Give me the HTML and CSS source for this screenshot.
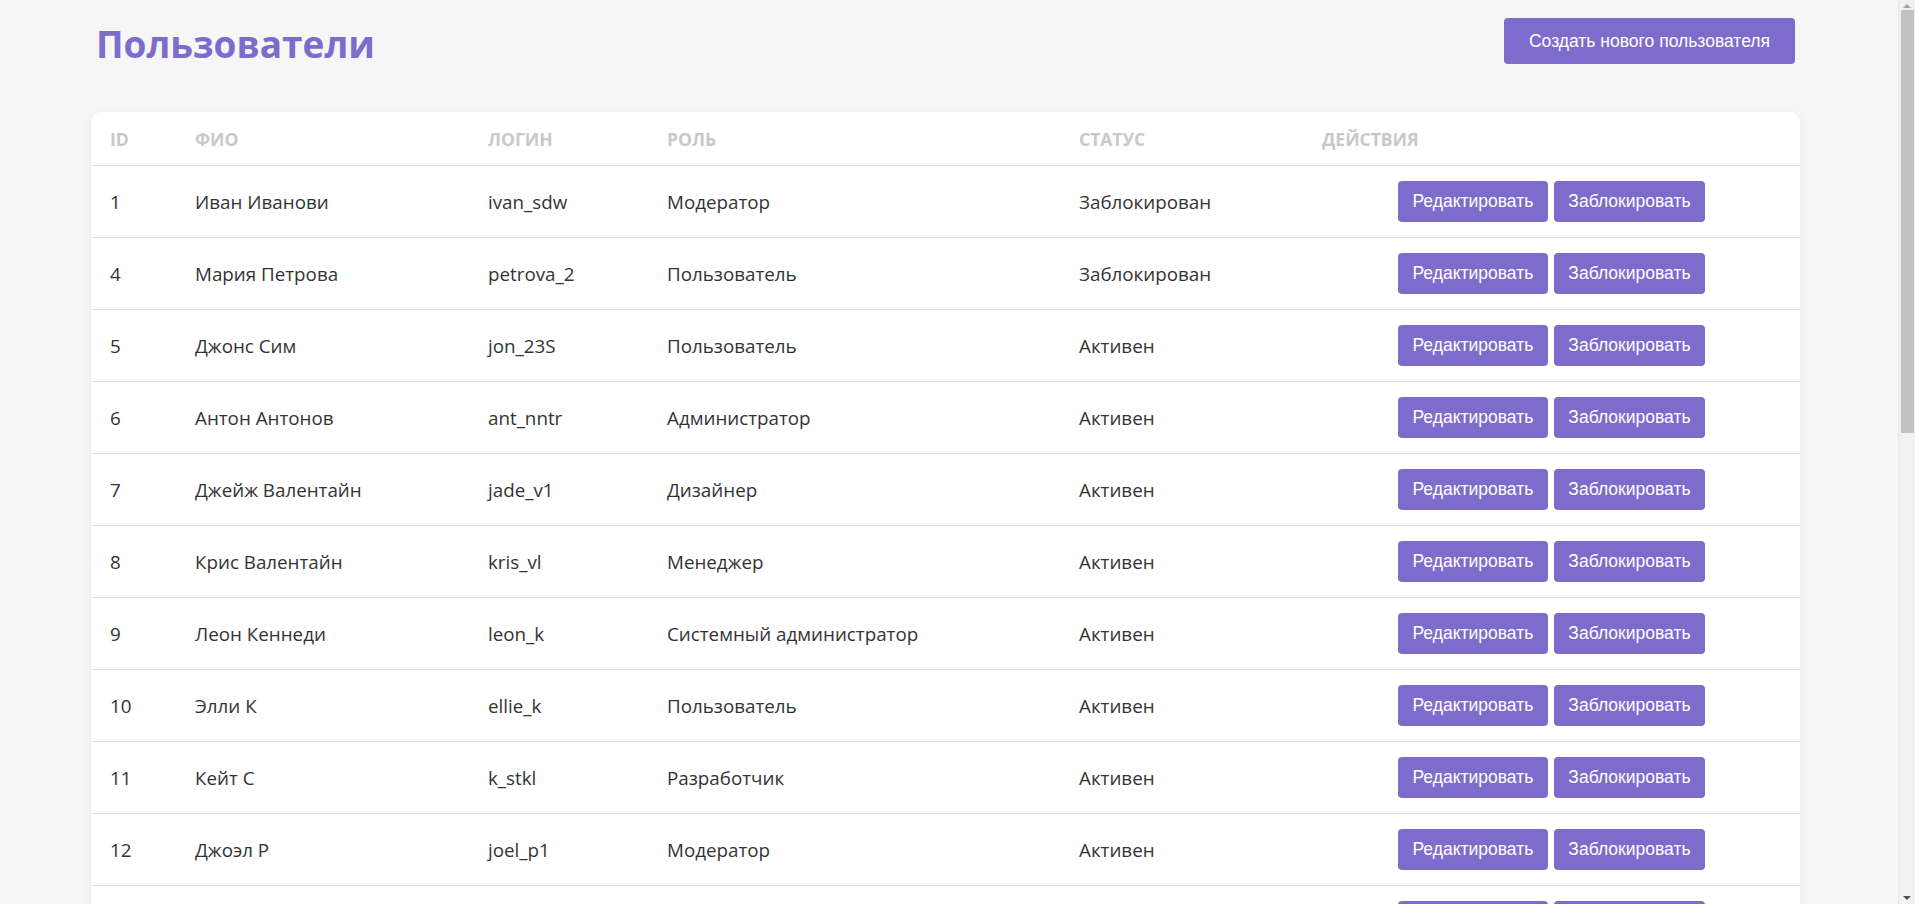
FILE: index.html
```html
<!DOCTYPE html>
<html lang="ru">
<head>
<meta charset="utf-8">
<title>Пользователи</title>
<link rel="stylesheet" href="styles.css">
</head>
<body>
<div class="page">
  <header class="page-header">
    <h1 class="page-title">Пользователи</h1>
    <button class="btn btn-create">Создать нового пользователя</button>
  </header>
  <div class="card">
    <table class="users">
      <colgroup>
        <col class="c-id"><col class="c-name"><col class="c-login"><col class="c-role"><col class="c-status"><col class="c-actions">
      </colgroup>
      <thead>
        <tr><th>ID</th><th>ФИО</th><th>Логин</th><th>Роль</th><th>Статус</th><th>Действия</th></tr>
      </thead>
      <tbody>
        <tr><td>1</td><td>Иван Иванови</td><td>ivan_sdw</td><td>Модератор</td><td>Заблокирован</td><td class="actions"><button class="btn">Редактировать</button><button class="btn">Заблокировать</button></td></tr>
        <tr><td>4</td><td>Мария Петрова</td><td>petrova_2</td><td>Пользователь</td><td>Заблокирован</td><td class="actions"><button class="btn">Редактировать</button><button class="btn">Заблокировать</button></td></tr>
        <tr><td>5</td><td>Джонс Сим</td><td>jon_23S</td><td>Пользователь</td><td>Активен</td><td class="actions"><button class="btn">Редактировать</button><button class="btn">Заблокировать</button></td></tr>
        <tr><td>6</td><td>Антон Антонов</td><td>ant_nntr</td><td>Администратор</td><td>Активен</td><td class="actions"><button class="btn">Редактировать</button><button class="btn">Заблокировать</button></td></tr>
        <tr><td>7</td><td>Джейж Валентайн</td><td>jade_v1</td><td>Дизайнер</td><td>Активен</td><td class="actions"><button class="btn">Редактировать</button><button class="btn">Заблокировать</button></td></tr>
        <tr><td>8</td><td>Крис Валентайн</td><td>kris_vl</td><td>Менеджер</td><td>Активен</td><td class="actions"><button class="btn">Редактировать</button><button class="btn">Заблокировать</button></td></tr>
        <tr><td>9</td><td>Леон Кеннеди</td><td>leon_k</td><td>Системный администратор</td><td>Активен</td><td class="actions"><button class="btn">Редактировать</button><button class="btn">Заблокировать</button></td></tr>
        <tr><td>10</td><td>Элли К</td><td>ellie_k</td><td>Пользователь</td><td>Активен</td><td class="actions"><button class="btn">Редактировать</button><button class="btn">Заблокировать</button></td></tr>
        <tr><td>11</td><td>Кейт С</td><td>k_stkl</td><td>Разработчик</td><td>Активен</td><td class="actions"><button class="btn">Редактировать</button><button class="btn">Заблокировать</button></td></tr>
        <tr><td>12</td><td>Джоэл Р</td><td>joel_p1</td><td>Модератор</td><td>Активен</td><td class="actions"><button class="btn">Редактировать</button><button class="btn">Заблокировать</button></td></tr>
        <tr><td>13</td><td>Тесс Сервопулос</td><td>tess_s</td><td>Пользователь</td><td>Активен</td><td class="actions"><button class="btn">Редактировать</button><button class="btn">Заблокировать</button></td></tr>
        <tr><td>14</td><td>Ада Вонг</td><td>ada_w</td><td>Аналитик</td><td>Активен</td><td class="actions"><button class="btn">Редактировать</button><button class="btn">Заблокировать</button></td></tr>
        <tr><td>15</td><td>Клэр Рэдфилд</td><td>claire_r</td><td>Пользователь</td><td>Активен</td><td class="actions"><button class="btn">Редактировать</button><button class="btn">Заблокировать</button></td></tr>
        <tr><td>16</td><td>Крис Рэдфилд</td><td>chris_r</td><td>Модератор</td><td>Активен</td><td class="actions"><button class="btn">Редактировать</button><button class="btn">Заблокировать</button></td></tr>
        <tr><td>17</td><td>Джилл Валентайн</td><td>jill_v</td><td>Менеджер</td><td>Активен</td><td class="actions"><button class="btn">Редактировать</button><button class="btn">Заблокировать</button></td></tr>
        <tr><td>18</td><td>Альберт Вескер</td><td>wesker_a</td><td>Администратор</td><td>Заблокирован</td><td class="actions"><button class="btn">Редактировать</button><button class="btn">Заблокировать</button></td></tr>
        <tr><td>19</td><td>Ребекка Чемберс</td><td>becca_ch</td><td>Пользователь</td><td>Активен</td><td class="actions"><button class="btn">Редактировать</button><button class="btn">Заблокировать</button></td></tr>
        <tr><td>20</td><td>Барри Бёртон</td><td>barry_b</td><td>Разработчик</td><td>Активен</td><td class="actions"><button class="btn">Редактировать</button><button class="btn">Заблокировать</button></td></tr>
        <tr><td>21</td><td>Карлос Оливейра</td><td>carlos_o</td><td>Дизайнер</td><td>Активен</td><td class="actions"><button class="btn">Редактировать</button><button class="btn">Заблокировать</button></td></tr>
        <tr><td>22</td><td>Шерри Биркин</td><td>sherry_b</td><td>Пользователь</td><td>Активен</td><td class="actions"><button class="btn">Редактировать</button><button class="btn">Заблокировать</button></td></tr>
        <tr><td>23</td><td>Хелена Харпер</td><td>helena_h</td><td>Модератор</td><td>Активен</td><td class="actions"><button class="btn">Редактировать</button><button class="btn">Заблокировать</button></td></tr>
        <tr><td>24</td><td>Эшли Грэм</td><td>ashley_g</td><td>Пользователь</td><td>Активен</td><td class="actions"><button class="btn">Редактировать</button><button class="btn">Заблокировать</button></td></tr>
        <tr><td>25</td><td>Луис Серра</td><td>luis_s</td><td>Системный администратор</td><td>Активен</td><td class="actions"><button class="btn">Редактировать</button><button class="btn">Заблокировать</button></td></tr>
      </tbody>
    </table>
  </div>
</div>
<div class="scrollbar" aria-hidden="true">
  <span class="scroll-arrow scroll-up"></span>
  <span class="scroll-thumb"></span>
  <span class="scroll-arrow scroll-down"></span>
</div>
</body>
</html>
```
FILE: styles.css
```css
html, body {
  margin: 0;
  padding: 0;
  background: #f6f6f6;
}

html {
  scrollbar-width: none;
}

body {
  font-family: "Open Sans", "Noto Sans", sans-serif;
  color: #333333;
}

.page {
  width: 1709px;
  margin: 0 0 0 91px;
  padding: 18px 0 40px;
}

.page-header {
  display: flex;
  align-items: flex-start;
  justify-content: space-between;
  padding: 0 5px 0 5px;
  height: 46px;
}

.page-title {
  margin: 0;
  padding-top: 3px;
  font-size: 37px;
  line-height: 46px;
  font-weight: 700;
  color: #7e6ccd;
}

.btn {
  font-family: "Liberation Sans", Arial, sans-serif;
  font-size: 17.5px;
  color: #ffffff;
  background: #7e6ccd;
  border: none;
  border-radius: 4px;
  cursor: pointer;
}

.btn-create {
  width: 291px;
  height: 46px;
  padding: 0;
}

.card {
  margin-top: 48px;
  background: #ffffff;
  border-radius: 10px;
  box-shadow: 0 2px 10px rgba(0, 0, 0, 0.05);
  overflow: hidden;
}

.users {
  width: 100%;
  border-collapse: collapse;
  table-layout: fixed;
}

.c-id { width: 85px; }
.c-name { width: 293px; }
.c-login { width: 179px; }
.c-role { width: 412px; }
.c-status { width: 243px; }
.c-actions { width: 497px; }

.users th {
  height: 53px;
  padding: 0 19px;
  text-align: left;
  font-size: 17.5px;
  font-weight: 700;
  text-transform: uppercase;
  color: #c5c9cc;
  border-bottom: 1px solid #e0e0e0;
}

.users td {
  height: 71px;
  padding: 0 19px;
  font-size: 18.8px;
  border-bottom: 1px solid #e0e0e0;
  white-space: nowrap;
}

.users td.actions {
  text-align: center;
  font-size: 0;
}

.users td.actions .btn {
  height: 41px;
  padding: 0 14.5px;
  margin: 0 3px;
}

/* imitation of the classic browser scrollbar seen in the reference */
.scrollbar {
  position: fixed;
  top: 0;
  right: 0;
  width: 17px;
  height: 100vh;
  background: #f1f1f1;
  border-left: 1px solid #e8e8e8;
  box-sizing: border-box;
}

.scroll-thumb {
  position: absolute;
  top: 10px;
  left: 2px;
  width: 13px;
  height: 423px;
  background: #c1c1c1;
}

.scroll-arrow {
  position: absolute;
  left: 4px;
  width: 0;
  height: 0;
  border-left: 4px solid transparent;
  border-right: 4px solid transparent;
}

.scroll-up {
  top: 4px;
  border-bottom: 4px solid #a3a3a3;
}

.scroll-down {
  bottom: 4px;
  border-top: 4px solid #505050;
}
```
